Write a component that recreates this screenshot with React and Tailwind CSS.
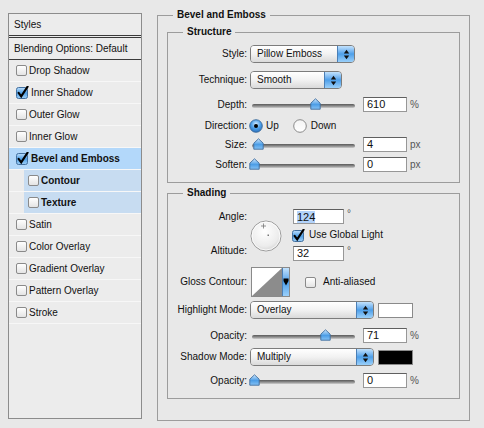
import React from "react";

function Check({ checked }) {
  if (checked) {
    return (
      <svg width="13" height="13" viewBox="0 0 13 13" className="shrink-0 block">
        <defs>
          <linearGradient id="cbg" x1="0" y1="0" x2="0" y2="1">
            <stop offset="0" stopColor="#bfe0fd" />
            <stop offset="0.5" stopColor="#4f9fe6" />
            <stop offset="1" stopColor="#9fd0f8" />
          </linearGradient>
        </defs>
        <rect x="0.5" y="1.5" width="11" height="11" rx="2" fill="url(#cbg)" stroke="#43709f" />
        <path d="M2.6 6.8 L5.2 10.4 L11.6 0.6" stroke="#000" strokeWidth="2.1" fill="none" strokeLinecap="round" />
      </svg>
    );
  }
  return (
    <span className="block w-[11px] h-[11px] shrink-0 rounded-[2px] border border-[#8a8a8a] bg-gradient-to-b from-white to-[#e4e4e4]" />
  );
}

function Arrows() {
  return (
    <svg width="7" height="11" viewBox="0 0 7 11" className="block">
      <path d="M0.8 4.4 L3.5 0.8 L6.2 4.4 Z" fill="#111" />
      <path d="M0.8 6.6 L6.2 6.6 L3.5 10.2 Z" fill="#111" />
    </svg>
  );
}

function Select({ w, children }) {
  return (
    <div className={`flex h-[18px] ${w} rounded-[4px] border border-[#7c7c7c] overflow-hidden shrink-0`}>
      <div className="flex-1 flex items-center pl-[6px] bg-gradient-to-b from-white via-[#f2f2f2] to-[#dadada]">
        {children}
      </div>
      <div className="w-[17px] flex items-center justify-center border-l border-[#4b7fb6] bg-gradient-to-b from-[#c2e2fd] via-[#4d9fe9] to-[#9ad0fa]">
        <Arrows />
      </div>
    </div>
  );
}

function Thumb() {
  return (
    <svg width="11" height="12" viewBox="0 0 11 12" className="block">
      <defs>
        <linearGradient id="thg" x1="0" y1="0" x2="0" y2="1">
          <stop offset="0" stopColor="#cfe8fe" />
          <stop offset="0.55" stopColor="#4c9de6" />
          <stop offset="1" stopColor="#86c3f6" />
        </linearGradient>
      </defs>
      <path d="M5.5 0.8 L10.2 5.2 L10.2 11.2 L0.8 11.2 L0.8 5.2 Z" fill="url(#thg)" stroke="#3f6d9d" strokeWidth="0.9" strokeLinejoin="round" />
    </svg>
  );
}

function Slider({ pct }) {
  const left = 4 + pct * 101 - 5.5;
  return (
    <div className="relative w-[105px] h-[13px] shrink-0">
      <div className="absolute left-[2px] right-0 top-[6px] h-[4px] rounded-full bg-gradient-to-b from-[#5a5a5a] via-[#8a8a8a] to-[#cfcfcf]" />
      <div className="absolute top-0" style={{ left: `${left}px` }}>
        <Thumb />
      </div>
    </div>
  );
}

function Field({ value, w = "w-[44px]", selected }) {
  return (
    <div className={`${w} h-[15px] shrink-0 border border-[#979797] border-t-[#5f5f5f] bg-white pl-[3px] flex items-center leading-none text-[11px]`}>
      {selected ? <span className="bg-[#b3d3fb] leading-[12px]">{value}</span> : value}
    </div>
  );
}

function Radio({ on }) {
  if (on) {
    return (
      <svg width="14" height="14" viewBox="0 0 14 14" className="block shrink-0">
        <defs>
          <radialGradient id="rdg" cx="0.5" cy="0.35" r="0.6">
            <stop offset="0" stopColor="#d6ecff" />
            <stop offset="0.6" stopColor="#4d9fe8" />
            <stop offset="1" stopColor="#2f78c4" />
          </radialGradient>
        </defs>
        <circle cx="7" cy="7" r="6.3" fill="url(#rdg)" stroke="#3d6b9b" strokeWidth="0.9" />
        <circle cx="7" cy="7" r="2" fill="#000" />
      </svg>
    );
  }
  return (
    <svg width="14" height="14" viewBox="0 0 14 14" className="block shrink-0">
      <defs>
        <linearGradient id="rwg" x1="0" y1="0" x2="0" y2="1">
          <stop offset="0" stopColor="#f4f4f4" />
          <stop offset="1" stopColor="#ffffff" />
        </linearGradient>
      </defs>
      <circle cx="7" cy="7" r="6.3" fill="url(#rwg)" stroke="#7e7e7e" strokeWidth="0.9" />
    </svg>
  );
}

function Label({ children }) {
  return <div className="w-[82px] shrink-0 pr-[3px] text-right">{children}</div>;
}

const styleItems = [
  { t: "Drop Shadow" },
  { t: "Inner Shadow", c: true },
  { t: "Outer Glow" },
  { t: "Inner Glow" },
  { t: "Bevel and Emboss", c: true, sel: true },
  { t: "Contour", sub: true },
  { t: "Texture", sub: true },
  { t: "Satin" },
  { t: "Color Overlay" },
  { t: "Gradient Overlay" },
  { t: "Pattern Overlay" },
  { t: "Stroke" },
];

export default function App() {
  return (
    <div className="w-[484px] h-[428px] bg-[#e8e8e8] flex items-start font-['Liberation_Sans',Arial,sans-serif] text-[10px] text-[#111] leading-[12px] overflow-hidden">
      {/* Left styles list */}
      <div className="ml-[8px] mt-[13px] w-[134px] h-[406px] border border-[#8c8c8c] bg-[#ececec] flex flex-col">
        <div className="h-[22px] flex items-center pl-[5px] border-b border-[#3a3a3a]">Styles</div>
        <div className="h-[23px] mt-[1px] flex items-center pl-[5px] border-t border-b border-[#3a3a3a]">
          Blending Options: Default
        </div>
        {styleItems.map((it) =>
          it.sub ? (
            <div key={it.t} className="h-[22px] flex border-b border-[#f7f7f7]">
              <div className="ml-[15px] flex-1 flex items-center gap-[2px] pl-[4px] bg-[#c7dcf1] font-bold">
                <Check checked={it.c} />
                <span>{it.t}</span>
              </div>
            </div>
          ) : (
            <div
              key={it.t}
              className={`h-[22px] flex items-center gap-[2px] pl-[7px] border-b border-[#f7f7f7] ${it.sel ? "bg-[#b3d8fa] font-bold" : ""}`}
            >
              <Check checked={it.c} />
              <span>{it.t}</span>
            </div>
          )
        )}
      </div>

      {/* Right panel */}
      <fieldset className="ml-[15px] mt-[9px] w-[313px] h-[412px] border border-[#9c9c9c] min-w-0">
        <legend className="ml-[15px] px-[4px] font-bold leading-[12px]">Bevel and Emboss</legend>
        <div className="px-[9px] pt-[5px]">
          {/* Structure */}
          <fieldset className="border border-[#9c9c9c] pb-[10px] min-w-0">
            <legend className="ml-[15px] px-[4px] font-bold leading-[12px]">Structure</legend>
            <div className="flex items-center h-[18px] mt-[7px]">
              <Label>Style:</Label>
              <Select w="w-[105px]">Pillow Emboss</Select>
            </div>
            <div className="flex items-center h-[18px] mt-[8px]">
              <Label>Technique:</Label>
              <Select w="w-[92px]">Smooth</Select>
            </div>
            <div className="flex items-center h-[15px] mt-[8px]">
              <Label>Depth:</Label>
              <Slider pct={0.61} />
              <div className="ml-[8px]"><Field value="610" /></div>
              <span className="ml-[3px] text-[#555]">%</span>
            </div>
            <div className="flex items-center h-[14px] mt-[7px]">
              <Label>Direction:</Label>
              <div className="-ml-[1px]"><Radio on /></div>
              <span className="ml-[3px]">Up</span>
              <div className="ml-[14px]"><Radio /></div>
              <span className="ml-[4px]">Down</span>
            </div>
            <div className="flex items-center h-[15px] mt-[4px]">
              <Label>Size:</Label>
              <Slider pct={0.04} />
              <div className="ml-[8px]"><Field value="4" /></div>
              <span className="ml-[3px] text-[#555]">px</span>
            </div>
            <div className="flex items-center h-[15px] mt-[5px]">
              <Label>Soften:</Label>
              <Slider pct={0} />
              <div className="ml-[8px]"><Field value="0" /></div>
              <span className="ml-[3px] text-[#555]">px</span>
            </div>
          </fieldset>

          {/* Shading */}
          <fieldset className="mt-[4px] border border-[#9c9c9c] pb-[10px] min-w-0">
            <legend className="ml-[15px] px-[4px] font-bold leading-[12px]">Shading</legend>
            <div className="flex h-[52px] mt-[10px]">
              <div className="w-[82px] shrink-0 pr-[3px] flex flex-col justify-between text-right">
                <div className="h-[15px] leading-[15px]">Angle:</div>
                <div className="h-[15px] leading-[15px] mb-[3px]">Altitude:</div>
              </div>
              <svg width="32" height="32" viewBox="0 0 32 32" className="block mt-[11px] shrink-0">
                <defs>
                  <radialGradient id="dial" cx="0.45" cy="0.35" r="0.7">
                    <stop offset="0" stopColor="#ffffff" />
                    <stop offset="0.7" stopColor="#ececec" />
                    <stop offset="1" stopColor="#cfcfcf" />
                  </radialGradient>
                </defs>
                <circle cx="16" cy="16" r="15" fill="url(#dial)" stroke="#9a9a9a" strokeWidth="1" />
                <circle cx="16" cy="16" r="14" fill="none" stroke="#ffffff" strokeWidth="0.8" />
                <path d="M13.5 3.5 V8.5 M11 6 H16" stroke="#777" strokeWidth="0.8" />
                <rect x="17.5" y="14.5" width="1.5" height="1.5" fill="#777" />
              </svg>
              <div className="ml-[11px] flex flex-col justify-between">
                <div className="flex items-start">
                  <Field value="124" w="w-[51px]" selected />
                  <span className="ml-[3px] -mt-[1px] text-[#555]">°</span>
                </div>
                <div className="flex items-center gap-[4px] -ml-[1px]">
                  <Check checked />
                  <span>Use Global Light</span>
                </div>
                <div className="flex items-start">
                  <Field value="32" w="w-[51px]" />
                  <span className="ml-[3px] -mt-[1px] text-[#555]">°</span>
                </div>
              </div>
            </div>

            <div className="flex items-center h-[30px] mt-[6px]">
              <Label>Gloss Contour:</Label>
              <div className="ml-[1px] w-[39px] h-[30px] border border-[#8a8a8a] flex overflow-hidden shrink-0">
                <svg width="30" height="28" viewBox="0 0 30 28" className="block">
                  <rect width="30" height="28" fill="#fff" />
                  <path d="M0 28 L30 0 L30 28 Z" fill="#8c8c8c" />
                </svg>
                <div className="flex-1 border-l border-[#4b7fb6] bg-gradient-to-b from-[#c2e2fd] via-[#4d9fe9] to-[#9ad0fa] flex items-center justify-center">
                  <svg width="6" height="8" viewBox="0 0 6 8" className="block">
                    <path d="M0.5 0.5 H5.5 V3 L3 7.5 L0.5 3 Z" fill="#000" />
                  </svg>
                </div>
              </div>
              <div className="ml-[15px]"><Check /></div>
              <span className="ml-[7px]">Anti-aliased</span>
            </div>

            <div className="flex items-center h-[18px] mt-[4px]">
              <Label>Highlight Mode:</Label>
              <Select w="w-[124px]">Overlay</Select>
              <div className="ml-[4px] w-[35px] h-[15px] border border-[#8a8a8a] bg-white" />
            </div>
            <div className="flex items-center h-[15px] mt-[9px]">
              <Label>Opacity:</Label>
              <Slider pct={0.71} />
              <div className="ml-[8px]"><Field value="71" /></div>
              <span className="ml-[3px] text-[#555]">%</span>
            </div>
            <div className="flex items-center h-[18px] mt-[5px]">
              <Label>Shadow Mode:</Label>
              <Select w="w-[124px]">Multiply</Select>
              <div className="ml-[4px] w-[35px] h-[15px] border border-[#8a8a8a] bg-black" />
            </div>
            <div className="flex items-center h-[15px] mt-[7px]">
              <Label>Opacity:</Label>
              <Slider pct={0} />
              <div className="ml-[8px]"><Field value="0" /></div>
              <span className="ml-[3px] text-[#555]">%</span>
            </div>
          </fieldset>
        </div>
      </fieldset>
    </div>
  );
}
